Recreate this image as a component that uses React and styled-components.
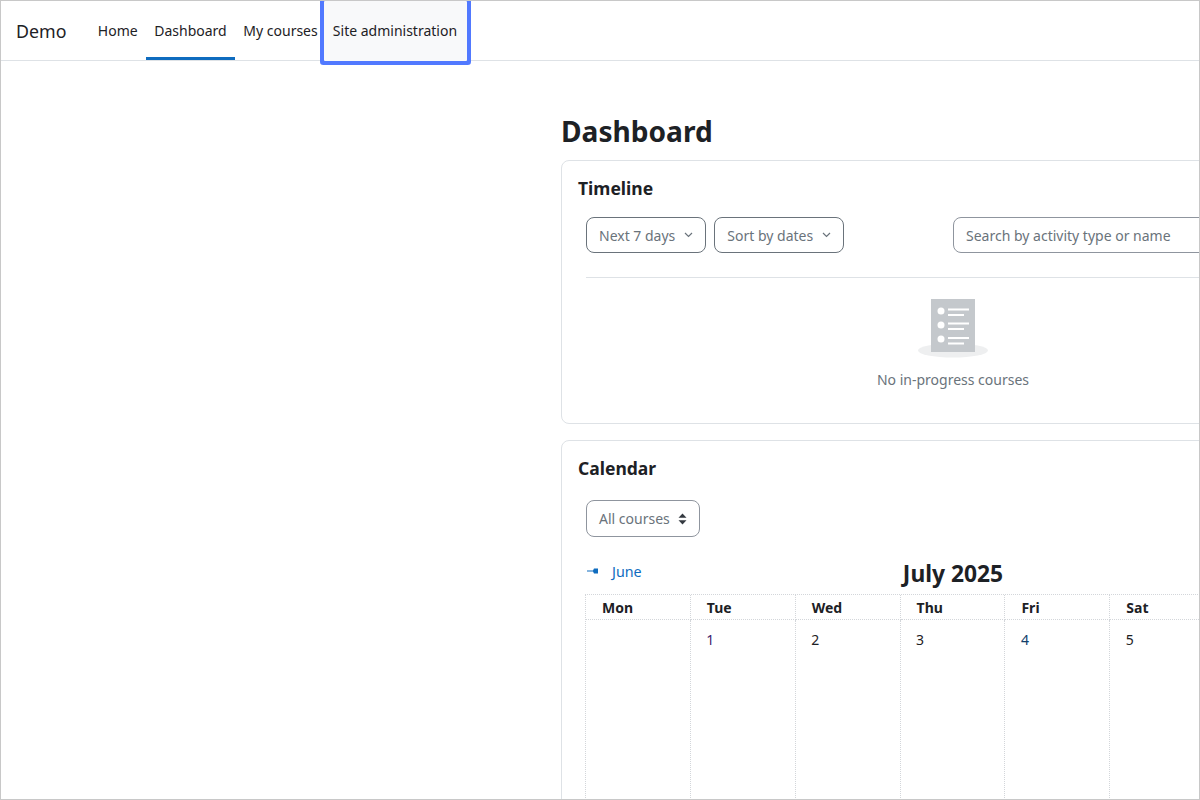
import React from 'react';
import styled, { createGlobalStyle } from 'styled-components';

const GlobalStyle = createGlobalStyle`
  html, body {
    margin: 0;
    padding: 0;
    background: #fff;
  }
  body {
    font-family: "Noto Sans", "Open Sans", sans-serif;
    font-size: 14px;
    color: #1d2125;
  }
`;

const Frame = styled.div`
  box-sizing: border-box;
  width: 1200px;
  height: 800px;
  border: 1px solid #c8c8c8;
  overflow: hidden;
  background: #fff;
`;

const Navbar = styled.nav`
  display: flex;
  align-items: stretch;
  height: 59px;
  border-bottom: 1px solid #dee2e6;
  padding-left: 15px;
`;

const Brand = styled.span`
  display: flex;
  align-items: center;
  width: 73.5px;
  font-size: 17.8px;
  color: #1d2125;
`;

const NavItem = styled.a`
  display: flex;
  align-items: center;
  box-sizing: border-box;
  height: 59px;
  padding: 3px 8.3px 0;
  margin-bottom: -1px;
  color: #1d2125;
  border-bottom: 3px solid ${props => (props.$active ? '#0f6cbf' : 'transparent')};
`;

const FocusItem = styled(NavItem)`
  position: relative;
  margin-left: -2.2px;
  padding: 0 10px 2px 9px;
  height: 60px;
  border-bottom: 0;
  background: #f8f9fa;
  box-shadow: 0 0 0 4px #5179ff;
  border-radius: 1px;
`;

const Main = styled.main`
  width: 784px;
  margin-left: 560px;
  padding-top: 50px;
`;

const PageTitle = styled.h1`
  margin: 0 0 9px;
  font-size: 28.1px;
  line-height: 40px;
  font-weight: 700;
  color: #1d2125;
`;

const Card = styled.section`
  box-sizing: border-box;
  height: ${props => props.$height};
  margin-bottom: 16px;
  padding: 15px 16px 0;
  border: 1px solid #dee2e6;
  border-radius: 8px;
`;

const CardTitle = styled.h2`
  margin: 0 0 9px;
  font-size: 17.5px;
  line-height: 24px;
  font-weight: 700;
  color: #1d2125;
`;

const CardBody = styled.div`
  padding: 0 8px;
`;

const Toolbar = styled.div`
  display: flex;
  justify-content: space-between;
  margin-top: 17px;
  padding-bottom: 24px;
  border-bottom: 1px solid #dee2e6;
`;

const ButtonGroup = styled.div`
  display: flex;
  gap: 8px;
`;

const FilterButton = styled.button`
  display: flex;
  align-items: center;
  gap: ${props => props.$gap || '9px'};
  box-sizing: border-box;
  height: ${props => props.$height || '36px'};
  padding: 0 12px;
  background: #fff;
  border: 1px solid ${props => props.$border || '#6a737b'};
  border-radius: 8px;
  font: inherit;
  color: #6a737b;
`;

const SearchBox = styled.div`
  display: flex;
  align-items: center;
  box-sizing: border-box;
  width: 367px;
  height: 36px;
  padding: 0 12px;
  border: 1px solid #8f959e;
  border-radius: 8px;
  color: #6a737b;
`;

const EmptyState = styled.div`
  display: flex;
  flex-direction: column;
  align-items: center;
  padding-top: 21px;
  color: #6a737b;
`;

const EmptyText = styled.div`
  margin-top: 11px;
  line-height: 20px;
`;

const SelectRow = styled.div`
  margin-top: 20px;
  display: flex;
`;

const MonthRow = styled.div`
  display: grid;
  grid-template-columns: 1fr auto 1fr;
  height: 38px;
  margin-top: 19px;
`;

const PrevLink = styled.a`
  display: flex;
  align-items: center;
  align-self: start;
  gap: 13px;
  height: 20px;
  margin: 5px 0 0 1px;
  font-size: 14.3px;
  color: #0f6cbf;
`;

const MonthTitle = styled.h3`
  margin: 3px 0 0;
  font-size: 22.8px;
  line-height: 30px;
  font-weight: 700;
  color: #1d2125;
`;

const CalendarGrid = styled.div`
  display: grid;
  grid-template-columns: repeat(7, 104.86px);
  margin-left: -1px;
  border-top: 1px dotted #d3d6da;
  border-left: 1px dotted #d3d6da;
`;

const DayHead = styled.div`
  box-sizing: border-box;
  height: 25px;
  padding-left: 16px;
  line-height: 25px;
  font-weight: 700;
  border-right: 1px dotted #d3d6da;
  border-bottom: 1px dotted #d3d6da;
`;

const DayCell = styled.div`
  box-sizing: border-box;
  height: 200px;
  padding: 10px 0 0 15.5px;
  line-height: 20px;
  color: ${props => props.$color || '#1d2125'};
  border-right: 1px dotted #d3d6da;
`;

const Chevron = () => (
  <svg width="9" height="6" viewBox="0 0 9 6" fill="none">
    <path d="M1 1l3.5 3.5L8 1" stroke="#6a737b" strokeWidth="1.2" />
  </svg>
);

const SortCaret = () => (
  <svg width="9" height="12" viewBox="0 0 9 12">
    <path d="M4.5 0.5L8.5 4.8H0.5zM4.5 11.5L0.5 7.2H8.5z" fill="#343a40" />
  </svg>
);

const PrevArrow = () => (
  <svg width="12" height="6" viewBox="0 0 12 6">
    <path d="M0 2.4h6L7 .5h4v5H7L6 3.4H0z" fill="#0f6cbf" />
  </svg>
);

const NoCoursesIcon = () => (
  <svg width="70" height="60" viewBox="0 0 70 60">
    <ellipse cx="35" cy="51.5" rx="35" ry="7" fill="#eeeff0" />
    <rect x="13" y="0" width="44" height="53" fill="#c4c8cc" />
    <circle cx="23" cy="12" r="3.5" fill="#fff" />
    <circle cx="23" cy="26" r="3.5" fill="#fff" />
    <circle cx="23" cy="40" r="3.5" fill="#fff" />
    <path d="M30 9.5h21v2H30zM30 15h16v2H30zM30 23.5h21v2H30zM30 29h16v2H30zM30 38h21v2H30zM30 43.5h16v2H30z" fill="#fff" />
  </svg>
);

// sunday sits past the right edge of the window, so its column stays empty
const days = ['Mon', 'Tue', 'Wed', 'Thu', 'Fri', 'Sat', ''];
const dates = [
  { label: '' },
  { label: '1', color: '#3f1f6e' },
  { label: '2' },
  { label: '3' },
  { label: '4', color: '#123f6b' },
  { label: '5' },
  { label: '' },
];

export default function App() {
  return (
    <>
      <GlobalStyle />
      <Frame>
        <Navbar>
          <Brand>Demo</Brand>
          <NavItem>Home</NavItem>
          <NavItem $active>Dashboard</NavItem>
          <NavItem>My courses</NavItem>
          <FocusItem>Site administration</FocusItem>
        </Navbar>
        <Main>
          <PageTitle>Dashboard</PageTitle>
          <Card $height="264px">
            <CardTitle>Timeline</CardTitle>
            <CardBody>
              <Toolbar>
                <ButtonGroup>
                  <FilterButton>Next 7 days <Chevron /></FilterButton>
                  <FilterButton>Sort by dates <Chevron /></FilterButton>
                </ButtonGroup>
                <SearchBox>Search by activity type or name</SearchBox>
              </Toolbar>
              <EmptyState>
                <NoCoursesIcon />
                <EmptyText>No in-progress courses</EmptyText>
              </EmptyState>
            </CardBody>
          </Card>
          <Card $height="500px">
            <CardTitle>Calendar</CardTitle>
            <CardBody>
              <SelectRow>
                <FilterButton $height="37px" $border="#8f959e" $gap="8px">All courses <SortCaret /></FilterButton>
              </SelectRow>
              <MonthRow>
                <PrevLink><PrevArrow /> June</PrevLink>
                <MonthTitle>July 2025</MonthTitle>
              </MonthRow>
              <CalendarGrid>
                {days.map((day, i) => <DayHead key={i}>{day}</DayHead>)}
                {dates.map((date, i) => (
                  <DayCell key={i} $color={date.color}>{date.label}</DayCell>
                ))}
              </CalendarGrid>
            </CardBody>
          </Card>
        </Main>
      </Frame>
    </>
  );
}
